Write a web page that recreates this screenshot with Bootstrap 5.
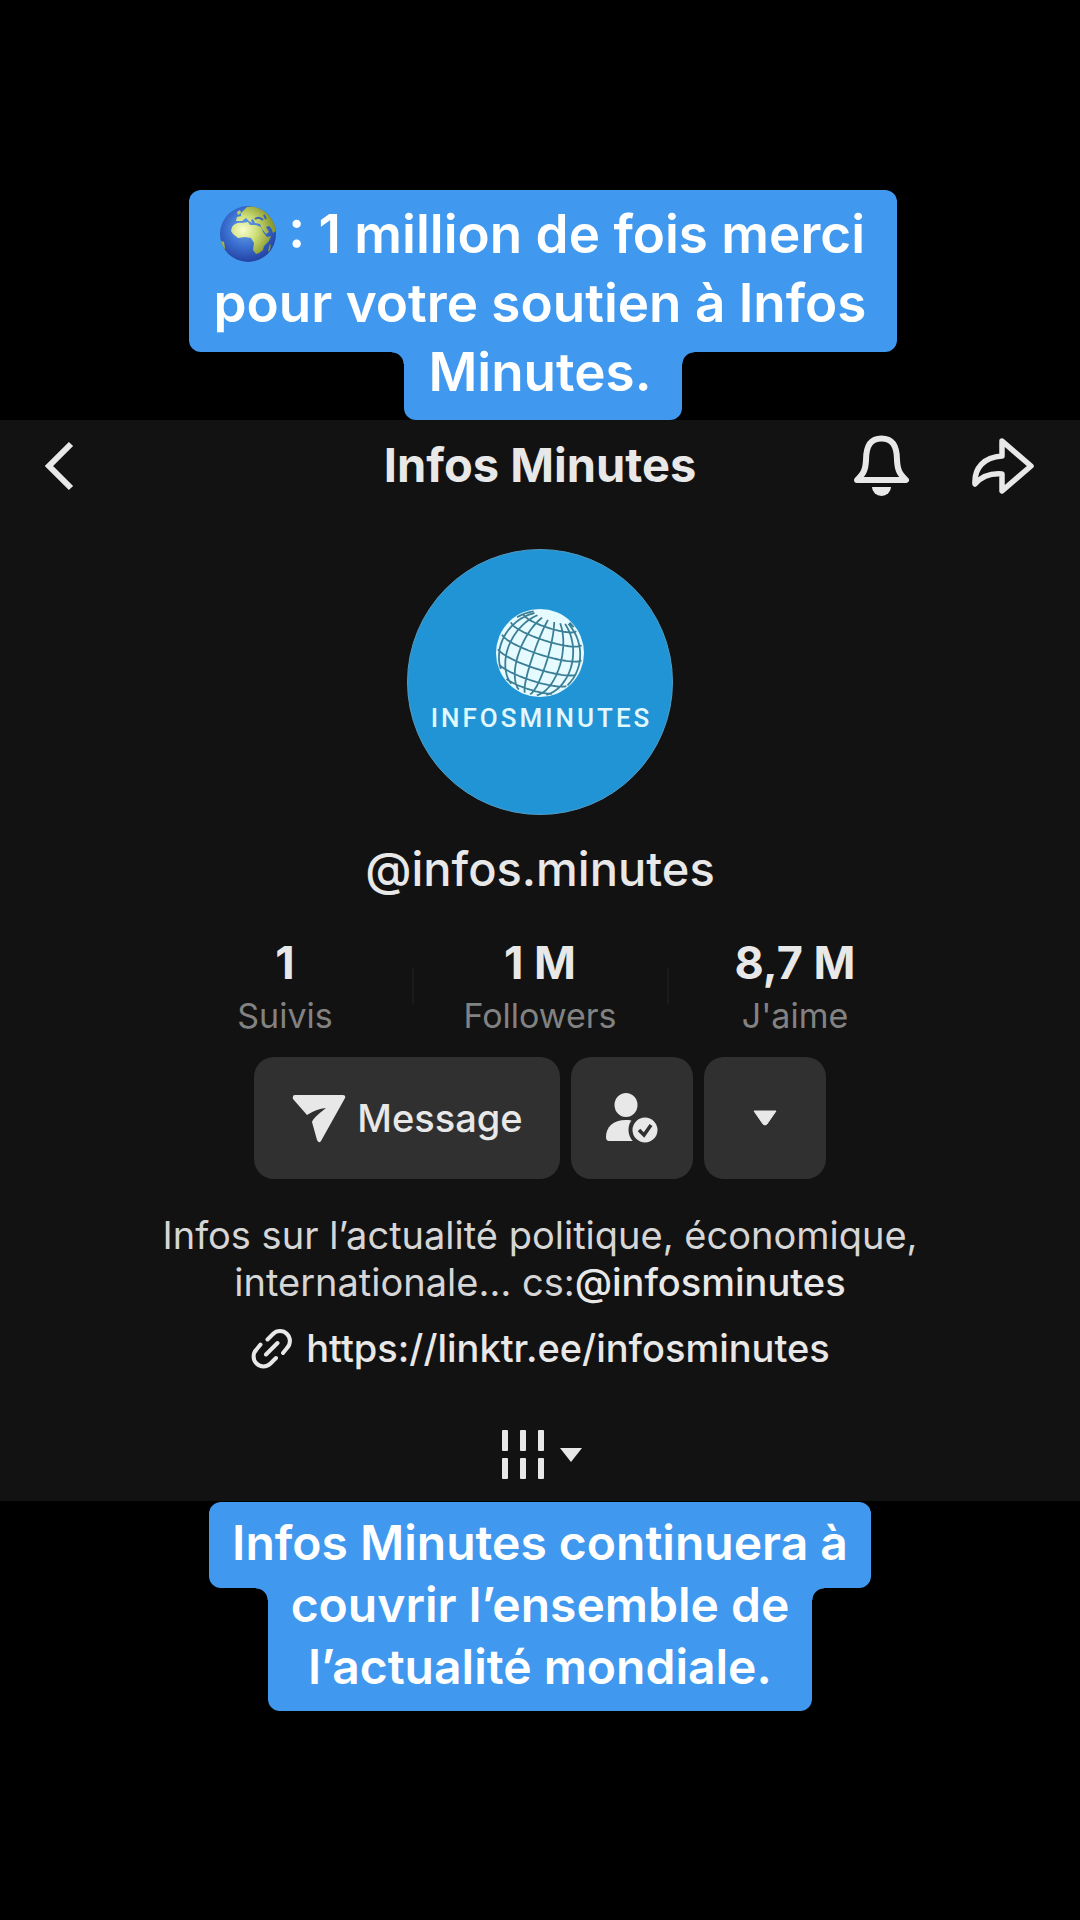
<!DOCTYPE html>
<html lang="fr">
<head>
<meta charset="utf-8">
<meta name="viewport" content="width=device-width, initial-scale=1">
<title>Infos Minutes</title>
<link href="https://cdn.jsdelivr.net/npm/bootstrap@5.3.0/dist/css/bootstrap.min.css" rel="stylesheet">
<style>
  body { background: #000; font-family: Inter, "Liberation Sans", sans-serif; color: #e8e8e8; }
  svg { display: block; flex: none; }
  .story { min-height: 100vh; padding-top: 190px; }

  /* Captions made of stacked blocks whose joints are rounded */
  .caption { --cap: #4099ef; color: #fff; font-weight: 600; text-align: center; }
  .caption-top { font-size: 53px; line-height: 69px; padding-left: 6px; --pad-l: 24px; --pad-r: 30px; }
  .caption-bottom { font-size: 48px; line-height: 62px; margin-top: 1px; --pad-l: 23px; --pad-r: 23px; }
  .cap-block { background: var(--cap); border-radius: 12px; padding: 10px var(--pad-r) 14px var(--pad-l); }
  .cap-block + .cap-block { position: relative; margin-top: -14px; padding-top: 0; padding-bottom: 13px; border-radius: 0 0 12px 12px; }
  .cap-block + .cap-block::before, .cap-block + .cap-block::after { content: ""; position: absolute; top: 14px; width: 12px; height: 12px; }
  .cap-block + .cap-block::before { right: 100%; background: radial-gradient(circle at 0 100%, transparent 11px, var(--cap) 12px); }
  .cap-block + .cap-block::after { left: 100%; background: radial-gradient(circle at 100% 100%, transparent 11px, var(--cap) 12px); }
  .earth { display: inline-block; vertical-align: -10px; margin: 0 -2px 0 4px; }

  .profile { background: #121212; padding-bottom: 22px; }
  .topbar { height: 92px; padding: 0 44px; }
  .topbar-side { flex: 1 1 0; gap: 59px; }
  .plain { background: none; border: 0; padding: 0; color: inherit; }
  .title-text { font-size: 47px; line-height: 57px; font-weight: 700; padding-bottom: 4px; }
  .avatar { width: 266px; height: 266px; margin-top: 37px; padding-top: 59px; border-radius: 50%; background: #2194d5; border: 1px solid #4f9dc6; }
  .brand { font: 500 26px/32px Roboto, sans-serif; letter-spacing: 3px; margin: 5px 0 0 3px; color: #e2f8ff; }
  .handle { font-size: 47px; line-height: 57px; font-weight: 500; margin-top: 25px; }
  .stats { width: 100%; max-width: 765px; margin-top: 39px; }
  .stat { flex: 1 1 0; color: inherit; text-decoration: none; text-align: center; position: relative; }
  .stat + .stat::before { content: ""; position: absolute; left: -1px; top: 32px; width: 2px; height: 36px; background: #1b1b1b; }
  .stat-num { font-size: 45px; line-height: 54px; font-weight: 700; }
  .stat-label { font-size: 34px; line-height: 42px; color: #828282; margin-top: 5px; }
  .actions { gap: 11px; margin-top: 20px; }
  .action { height: 122px; min-width: 122px; border: 0; border-radius: 20px; background: #303030; color: #e8e8e8; font-size: 38px; font-weight: 500; padding: 0 37px; gap: 10px; }
  .action:hover { background: #3a3a3a; color: #fff; }
  .bio { font-size: 38px; line-height: 47px; margin: 33px 0 0; color: #d6d6d6; text-align: center; }
  .bio a, .site { color: #e8e8e8; font-weight: 500; text-decoration: none; }
  .site { font-size: 38px; line-height: 47px; gap: 12px; margin-top: 19px; }
  .grid-tab { margin-top: 58px; gap: 13px; padding-left: 5px; }
</style>
</head>
<body>
<main class="story d-flex flex-column">

  <section class="caption caption-top d-flex flex-column align-items-center">
    <div class="cap-block"><svg class="earth" width="58" height="58" viewBox="0 0 58 58" role="img" aria-label="Terre">
      <defs>
        <radialGradient id="sea" cx=".45" cy=".4" r=".6"><stop offset="0" stop-color="#6fa6e8"/><stop offset=".55" stop-color="#3a6fd0"/><stop offset="1" stop-color="#2443a4"/></radialGradient>
        <radialGradient id="land" gradientUnits="userSpaceOnUse" cx="24" cy="25" r="30"><stop offset="0" stop-color="#f8fdd0"/><stop offset=".45" stop-color="#cfe07a"/><stop offset="1" stop-color="#8a9a2e"/></radialGradient>
        <clipPath id="disc"><circle cx="29" cy="29" r="28"/></clipPath>
      </defs>
      <circle cx="29" cy="29" r="28" fill="url(#sea)"/>
      <g clip-path="url(#disc)" fill="url(#land)">
        <path d="M13 22 Q17 17 23 18 L29 17 L31 20 L37 20 L42 22 L44 27 L48 32 L52 31 L50 36 L45 41 L44 45 L40 48 L37 49 L34 45 L35 38 L32 33 L26 32 L19 33 L14 29 L12 26Z"/>
        <path d="M17 16 L18 12 L22 11 L22 8 L28 2 L37 1 L46 5 L52 11 L56 19 L57 26 L54 28 L52 23 L50 21 L47 22 L50 27 L47 29 L43 24 L41 19 L36 18 L34 14 L32 15 L33 18 L30 16 L27 13 L23 16Z"/>
        <path d="M0 35 L5 37 L6 43 L4 48 L0 46Z"/>
        <path d="M50 41 L52 39 L51 45 L49 47Z"/>
        <path d="M18 7 L21 5 L22 8 L19 10Z"/>
      </g>
      <path d="M36 14 q4 -3 8 1 M45 10 l2 4" fill="none" stroke="#3a62b8" stroke-width="2"/>
    </svg> : 1 million de fois merci<br>pour votre soutien à Infos</div>
    <div class="cap-block">Minutes.</div>
  </section>

  <section class="profile d-flex flex-column align-items-center">
    <header class="topbar d-flex align-items-center w-100">
      <div class="topbar-side d-flex">
        <button class="plain" type="button" aria-label="Retour">
          <svg width="30" height="52" fill="none" stroke="currentColor" stroke-width="6"><path d="M27 4 L5 26 L27 48"/></svg>
        </button>
      </div>
      <h1 class="title-text m-0">Infos Minutes</h1>
      <div class="topbar-side d-flex justify-content-end">
        <button class="plain" type="button" aria-label="Notifications">
          <svg width="59" height="66" viewBox="0 0 59 66"><path d="M5 47 C11 41 13.500 38 14 27 C14 12 19 5.500 29.500 5.500 S45 12 45 27 C45.500 38 48 41 54 47 Z" fill="none" stroke="currentColor" stroke-width="6" stroke-linejoin="round"/><path d="M20 54 H39 A9.500 9 0 0 1 20 54Z" fill="currentColor"/></svg>
        </button>
        <button class="plain" type="button" aria-label="Partager">
          <svg width="66" height="60" viewBox="0 0 66 60" fill="none" stroke="currentColor" stroke-width="5.500" stroke-linejoin="round"><path d="M32 5 L61 30 L32 55 V38 C20 37 12 40 5 48 C4 32 14 21 32 20 Z"/></svg>
        </button>
      </div>
    </header>

    <div class="avatar d-flex flex-column align-items-center">
      <svg width="88" height="88" viewBox="-44 -44 88 88" aria-hidden="true">
        <circle r="44" fill="#e6fbff"/>
        <path id="graticule" fill="none" stroke="#3b7f97" stroke-width="1.800"/>
      </svg>
      <div class="brand">INFOSMINUTES</div>
    </div>

    <div class="handle">@infos.minutes</div>

    <nav class="stats d-flex" aria-label="Statistiques">
      <a class="stat" href="#"><div class="stat-num">1</div><div class="stat-label">Suivis</div></a>
      <a class="stat" href="#"><div class="stat-num">1 M</div><div class="stat-label">Followers</div></a>
      <a class="stat" href="#"><div class="stat-num">8,7 M</div><div class="stat-label">J'aime</div></a>
    </nav>

    <div class="actions d-flex justify-content-center">
      <button class="action btn d-flex align-items-center justify-content-center" type="button">
        <svg width="56" height="50" viewBox="0 0 56 50"><path fill="currentColor" d="M4 2 H52 Q55 2 54 5 L30 48 Q28 51 26 47 L21 29 Q22 25 35 15 Q25 16 16 22 L2 6 Q1 2 4 2Z"/></svg>Message
      </button>
      <button class="action btn p-0 d-flex align-items-center justify-content-center" type="button" aria-label="Abonné">
        <svg width="58" height="54" viewBox="0 0 58 54"><g fill="currentColor"><ellipse cx="23" cy="14" rx="11.500" ry="12"/><path d="M3 46 C3 36 10 29 23 29 C30 29 36 31 39 36 V50 H6 Q3 50 3 46Z"/></g><circle cx="42" cy="39" r="14.500" fill="currentColor" stroke="#303030" stroke-width="4"/><path d="M36 39 L41 44 L48 34" fill="none" stroke="#303030" stroke-width="3.500"/></svg>
      </button>
      <button class="action btn p-0 d-flex align-items-center justify-content-center" type="button" aria-label="Plus">
        <svg width="24" height="16" viewBox="0 0 24 16"><path d="M1 1 H23 L14 14 Q12 16 10 14Z" fill="currentColor" stroke="currentColor" stroke-linejoin="round"/></svg>
      </button>
    </div>

    <p class="bio">Infos sur l’actualité politique, économique,<br>internationale… cs:<a href="#">@infosminutes</a></p>

    <a class="site d-flex align-items-center" href="#">
      <svg width="44" height="44" viewBox="0 0 44 44" fill="none" stroke="currentColor" stroke-width="4" stroke-linecap="round"><path d="M17.500 12.500 L23 7 A9.500 9.500 0 0 1 37 21 L33 26 M26 31 L20.500 36.500 A9.500 9.500 0 0 1 6.500 22.500 L10.500 17.500 M16 27.500 L27.500 16"/></svg>
      <span>https://linktr.ee/infosminutes</span>
    </a>

    <button class="plain grid-tab d-flex align-items-center" type="button" aria-label="Publications">
      <svg width="44" height="49" viewBox="0 0 44 49" fill="currentColor"><rect x="0" y="0" width="6" height="21" rx="1"/><rect x="18" y="0" width="6" height="21" rx="1"/><rect x="36" y="0" width="6" height="21" rx="1"/><rect x="0" y="28" width="6" height="21" rx="1"/><rect x="18" y="28" width="6" height="21" rx="1"/><rect x="36" y="28" width="6" height="21" rx="1"/></svg>
      <svg width="24" height="14" viewBox="0 0 24 14"><path d="M1 0 H23 L12 14Z" fill="currentColor"/></svg>
    </button>
  </section>

  <section class="caption caption-bottom d-flex flex-column align-items-center">
    <div class="cap-block">Infos Minutes continuera à</div>
    <div class="cap-block">couvrir l’ensemble de<br>l’actualité mondiale.</div>
  </section>
</main>

<script src="https://cdn.jsdelivr.net/npm/bootstrap@5.3.0/dist/js/bootstrap.bundle.min.js"></script>
<script>
  // Orthographic graticule of the logo's globe
  (function () {
    var R = 43, rad = Math.PI / 180, tilt = 12 * rad, roll = 18 * rad, out = '';
    function project(lat, lon) {
      var x = Math.cos(lat * rad) * Math.sin(lon * rad), y = Math.sin(lat * rad);
      var z = Math.cos(lat * rad) * Math.cos(lon * rad);
      var y2 = y * Math.cos(tilt) - z * Math.sin(tilt), z2 = y * Math.sin(tilt) + z * Math.cos(tilt);
      return [R * (x * Math.cos(roll) + y2 * Math.sin(roll)), R * (x * Math.sin(roll) - y2 * Math.cos(roll)), z2];
    }
    function trace(points) {
      var pen = 'M';
      points.forEach(function (p) {
        if (p[2] < 0.15) { pen = 'M'; return; }
        out += pen + p[0].toFixed(1) + ' ' + p[1].toFixed(1);
        pen = 'L';
      });
    }
    for (var lon = -170; lon <= 180; lon += 20) {
      var m = [];
      for (var a = -72; a <= 64; a += 4) m.push(project(a, lon + 2));
      trace(m);
    }
    for (var lat = -70; lat <= 60; lat += 20) {
      var p = [];
      for (var b = -180; b <= 180; b += 4) p.push(project(lat, b));
      trace(p);
    }
    document.getElementById('graticule').setAttribute('d', out);
  })();
</script>
</body>
</html>
